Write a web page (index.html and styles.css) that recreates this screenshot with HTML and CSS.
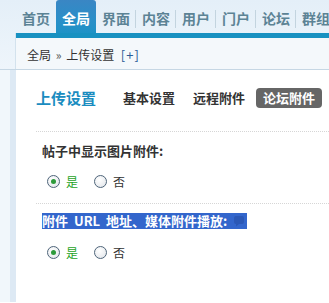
FILE: index.html
```html
<!DOCTYPE html>
<html lang="zh-CN">
<head>
<meta charset="utf-8">
<title>上传设置</title>
<link rel="stylesheet" href="styles.css">
</head>
<body>
<div class="top">
  <ul class="nav">
    <li class="tab">首页</li>
    <li class="tab active">全局</li>
    <li class="tab">界面</li>
    <li class="tab sep">内容</li>
    <li class="tab sep">用户</li>
    <li class="tab sep">门户</li>
    <li class="tab sep">论坛</li>
    <li class="tab sep">群组</li>
  </ul>
  <div class="crumbwrap">
    <div class="bar"></div>
    <div class="crumb">全局 <span class="raquo">»</span> 上传设置 <span class="plus">[+]</span></div>
  </div>
</div>
<div class="body">
  <div class="side"></div>
  <div class="rail"></div>
  <div class="main">
    <div class="headrow">
      <h3 class="title">上传设置</h3>
      <span class="sub">基本设置</span>
      <span class="sub">远程附件</span>
      <span class="sub current">论坛附件</span>
    </div>
    <div class="section">
      <div class="label">帖子中显示图片附件:</div>
      <div class="radios">
        <span class="radio on"></span><span class="yes">是</span>
        <span class="radio"></span><span class="no">否</span>
      </div>
    </div>
    <div class="section second">
      <div class="label"><span class="sel">附件 URL 地址、媒体附件播放: <svg class="help" width="12" height="12" viewBox="0 0 12 12"><path d="M3 1h6a2 2 0 0 1 2 2v4a2 2 0 0 1-2 2H6l-3 2.5V9H3a2 2 0 0 1-2-2V3a2 2 0 0 1 2-2z" fill="#2b58b6"/></svg></span></div>
      <div class="radios">
        <span class="radio on"></span><span class="yes">是</span>
        <span class="radio"></span><span class="no">否</span>
      </div>
    </div>
  </div>
</div>
</body>
</html>
```
FILE: styles.css
```css
html, body {
  margin: 0;
  padding: 0;
}
body {
  width: 329px;
  height: 303px;
  overflow: hidden;
  font-family: "Noto Sans CJK SC", "Liberation Sans", sans-serif;
  color: #333;
  background: #fff;
}
.top {
  background: linear-gradient(#e4eff8, #eef5fb);
  border-bottom: 1px solid #c6d7e4;
}
.nav {
  list-style: none;
  margin: 0;
  padding: 0 0 0 16px;
  display: flex;
  height: 33px;
  white-space: nowrap;
}
.tab {
  flex: 0 0 40px;
  box-sizing: border-box;
  text-align: center;
  font-size: 14px;
  font-weight: bold;
  line-height: 14px;
  padding-top: 11px;
  color: #5c8395;
  position: relative;
}
.tab.sep::before {
  content: "";
  position: absolute;
  left: -1px;
  top: 10px;
  height: 18px;
  border-left: 1px solid #c3d4df;
}
.tab.active {
  color: #fff;
  background: linear-gradient(#3a86c4, #2a8fc8 60%, #1e92c6);
  border-radius: 3px 3px 0 0;
}
.crumbwrap {
  margin-left: 15px;
  border-left: 1px solid #d3e2ed;
  background: #f4f8fb;
}
.bar {
  height: 5px;
  background: #1891c1;
}
.crumb {
  height: 31px;
  box-sizing: border-box;
  padding: 10px 0 0 11px;
  font-size: 12px;
  line-height: 14px;
  color: #333;
  white-space: nowrap;
}
.raquo {
  color: #555;
  margin: 0 2px;
}
.plus {
  color: #2c5c96;
  margin-left: 4px;
  font-size: 13px;
  letter-spacing: 1px;
}
.body {
  display: flex;
  height: 232px;
}
.side {
  width: 10px;
  background: #f1f7fb;
}
.rail {
  width: 6px;
  background: #dde9f4;
}
.main {
  flex: 1;
  background: #fff;
  padding-left: 20px;
}
.headrow {
  display: flex;
  align-items: center;
  height: 20px;
  margin-top: 18px;
  white-space: nowrap;
}
.title {
  margin: 0 20px 0 0;
  font-size: 15px;
  line-height: 20px;
  font-weight: bold;
  color: #1a8cc0;
}
.sub {
  font-size: 13px;
  font-weight: bold;
  line-height: 20px;
  padding: 0 7px;
  margin-right: 4px;
  color: #333;
  border-radius: 4px;
}
.sub.current {
  background: #666;
  color: #fff;
}
.section {
  border-top: 1px dotted #d6d6d6;
  margin-top: 23px;
}
.section.second {
  margin-top: 13px;
}
.label {
  margin-top: 10px;
  padding-left: 6px;
  font-size: 13px;
  font-weight: bold;
  line-height: 18px;
  height: 18px;
  white-space: nowrap;
}
.second .label {
  margin-top: 8px;
  height: 18px;
}
.sel {
  background: #3366cc;
  color: #fff;
  display: inline-block;
  line-height: 16px;
  height: 16px;
  padding-right: 2px;
  word-spacing: 3px;
}
.help {
  vertical-align: -1px;
}
.radios {
  display: flex;
  align-items: center;
  height: 18px;
  margin-top: 12px;
  padding-left: 11px;
  font-size: 12px;
}
.second .radios {
  margin-top: 13px;
}
.radio {
  width: 13px;
  height: 13px;
  box-sizing: border-box;
  border: 1px solid #4e6479;
  border-radius: 50%;
  background: radial-gradient(circle at 40% 35%, #fff, #dfe3e8);
  position: relative;
}
.radio.on::after {
  content: "";
  position: absolute;
  left: 3px;
  top: 3px;
  width: 5px;
  height: 5px;
  border-radius: 50%;
  background: #2d9a3a;
}
.yes {
  color: #1fa31f;
  margin: 0 16px 0 6px;
}
.no {
  color: #333;
  margin-left: 6px;
}
```
